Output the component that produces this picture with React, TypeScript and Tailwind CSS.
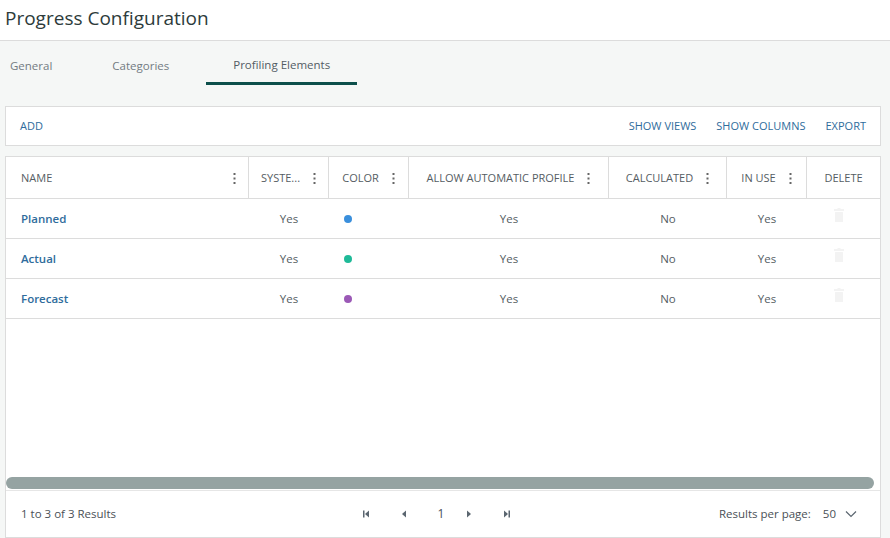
import React from 'react';

const font = { fontFamily: '"Open Sans", "Noto Sans", sans-serif' };

const columns = [
  { key: 'name', label: 'NAME', width: 'w-[243px]', menu: true, align: 'left' },
  { key: 'system', label: 'SYSTE...', width: 'w-[80px]', menu: true, align: 'center' },
  { key: 'color', label: 'COLOR', width: 'w-[80px]', menu: true, align: 'center' },
  { key: 'auto', label: 'ALLOW AUTOMATIC PROFILE', width: 'w-[200px]', menu: true, align: 'center' },
  { key: 'calc', label: 'CALCULATED', width: 'w-[118px]', menu: true, align: 'center' },
  { key: 'inuse', label: 'IN USE', width: 'w-[80px]', menu: true, align: 'center' },
  { key: 'delete', label: 'DELETE', width: 'flex-1', menu: false, align: 'center' },
];

const rows = [
  { name: 'Planned', system: 'Yes', color: 'bg-[#3a8fdc]', auto: 'Yes', calc: 'No', inuse: 'Yes' },
  { name: 'Actual', system: 'Yes', color: 'bg-[#1fba98]', auto: 'Yes', calc: 'No', inuse: 'Yes' },
  { name: 'Forecast', system: 'Yes', color: 'bg-[#9b59b6]', auto: 'Yes', calc: 'No', inuse: 'Yes' },
];

function Kebab() {
  return (
    <svg width="3" height="11" viewBox="0 0 3 11" className="shrink-0">
      <rect x="0.5" y="0" width="2" height="2" fill="#666" />
      <rect x="0.5" y="4.5" width="2" height="2" fill="#666" />
      <rect x="0.5" y="9" width="2" height="2" fill="#666" />
    </svg>
  );
}

function Trash() {
  return (
    <svg width="10" height="14" viewBox="0 0 10 14">
      <rect x="0" y="1" width="10" height="2" fill="#f3f3f3" />
      <rect x="3.5" y="0" width="3" height="1.5" fill="#f3f3f3" />
      <rect x="1" y="4" width="8" height="10" rx="0.5" fill="#f3f3f3" />
    </svg>
  );
}

function PageIcon({ kind }: { kind: 'first' | 'prev' | 'next' | 'last' }) {
  const fill = '#5b6670';
  return (
    <svg width="8" height="8" viewBox="0 0 8 8">
      {kind === 'first' && (
        <>
          <rect x="1" y="0.5" width="1.5" height="7" fill={fill} />
          <path d="M7 0.5 L3 4 L7 7.5 Z" fill={fill} />
        </>
      )}
      {kind === 'prev' && <path d="M6 0.5 L2 4 L6 7.5 Z" fill={fill} />}
      {kind === 'next' && <path d="M2 0.5 L6 4 L2 7.5 Z" fill={fill} />}
      {kind === 'last' && (
        <>
          <path d="M1 0.5 L5 4 L1 7.5 Z" fill={fill} />
          <rect x="5.5" y="0.5" width="1.5" height="7" fill={fill} />
        </>
      )}
    </svg>
  );
}

export default function App() {
  return (
    <div className="w-full h-[538px] overflow-hidden bg-[#f5f7f6] flex flex-col" style={font}>
      {/* page title */}
      <div className="h-[41px] shrink-0 bg-white border-b border-[#dcdcdc] flex items-center px-[5px]">
        <h1 className="text-[19px] text-[#2d3b3b] leading-none -mt-[4px]">Progress Configuration</h1>
      </div>

      {/* tabs */}
      <div className="h-[44px] shrink-0 flex items-end text-[11.5px] font-medium">
        <div className="ml-[10px] h-full flex items-center pt-[6px] text-[#737b82]">General</div>
        <div className="ml-[60px] h-full flex items-center pt-[6px] text-[#737b82]">Categories</div>
        <div className="ml-[37px] h-full flex items-center pt-[6px] px-[27px] text-[#535c64] border-b-[3px] border-[#0c4f4b]">
          Profiling Elements
        </div>
      </div>

      {/* toolbar */}
      <div className="mt-[21px] ml-[5px] w-[876px] h-[40px] shrink-0 bg-white border border-[#dcdcdc] flex items-center px-[14px] text-[11px] font-medium text-[#2f6c9c]">
        <span>ADD</span>
        <div className="ml-auto flex items-center gap-[20px]">
          <span>SHOW VIEWS</span>
          <span>SHOW COLUMNS</span>
          <span>EXPORT</span>
        </div>
      </div>

      {/* table */}
      <div className="mt-[10px] ml-[5px] w-[876px] flex-1 bg-white border border-[#dcdcdc] flex flex-col">
        <div className="h-[42px] shrink-0 flex border-b border-[#dcdcdc] text-[11px] text-[#555d63]">
          {columns.map((c, i) => (
            <div
              key={c.key}
              className={`${c.width} h-full flex items-center pt-[1px] ${i < columns.length - 1 ? 'border-r border-[#dcdcdc]' : ''} ${
                c.align === 'left' ? 'pl-[15px] pr-[12px] justify-between' : 'justify-center gap-[13px]'
              }`}
            >
              <span>{c.label}</span>
              {c.menu && <Kebab />}
            </div>
          ))}
        </div>

        {rows.map((r) => (
          <div key={r.name} className="h-[40px] shrink-0 flex items-center border-b border-[#dcdcdc] text-[11.5px] text-[#555d63]">
            <div className="w-[243px] pl-[15px] font-semibold text-[#2f6c9c]">{r.name}</div>
            <div className="w-[80px] text-center">{r.system}</div>
            <div className="w-[80px] pl-[15px] flex items-center">
              <span className={`w-[8px] h-[8px] rounded-full ${r.color}`} />
            </div>
            <div className="w-[200px] text-center">{r.auto}</div>
            <div className="w-[118px] text-center">{r.calc}</div>
            <div className="w-[80px] text-center">{r.inuse}</div>
            <div className="flex-1 flex justify-center pr-[10px] -mt-[8px]">
              <Trash />
            </div>
          </div>
        ))}

        <div className="flex-1" />

        {/* horizontal scrollbar */}
        <div className="h-[13px] shrink-0 pr-[6px]">
          <div className="h-[12px] rounded-full bg-[#95a3a2]" />
        </div>

        {/* footer */}
        <div className="h-[47px] shrink-0 border-t border-[#e6e6e6] flex items-center px-[15px] text-[11.5px] text-[#4a5056]">
          <span className="w-[326px] shrink-0">1 to 3 of 3 Results</span>
          <div className="flex items-center">
            <div className="w-[38px] flex justify-center"><PageIcon kind="first" /></div>
            <div className="w-[38px] flex justify-center"><PageIcon kind="prev" /></div>
            <div className="w-[36px] flex justify-center text-[12px]">1</div>
            <div className="w-[20px] flex justify-center"><PageIcon kind="next" /></div>
            <div className="w-[56px] flex justify-center"><PageIcon kind="last" /></div>
          </div>
          <div className="ml-auto flex items-center">
            <span>Results per page:</span>
            <span className="ml-[12px]">50</span>
            <svg width="12" height="8" viewBox="0 0 12 8" className="ml-[9px] mr-[8px]">
              <path d="M1 1.5 L6 6.5 L11 1.5" fill="none" stroke="#5b6670" strokeWidth="1.2" />
            </svg>
          </div>
        </div>
      </div>
    </div>
  );
}
